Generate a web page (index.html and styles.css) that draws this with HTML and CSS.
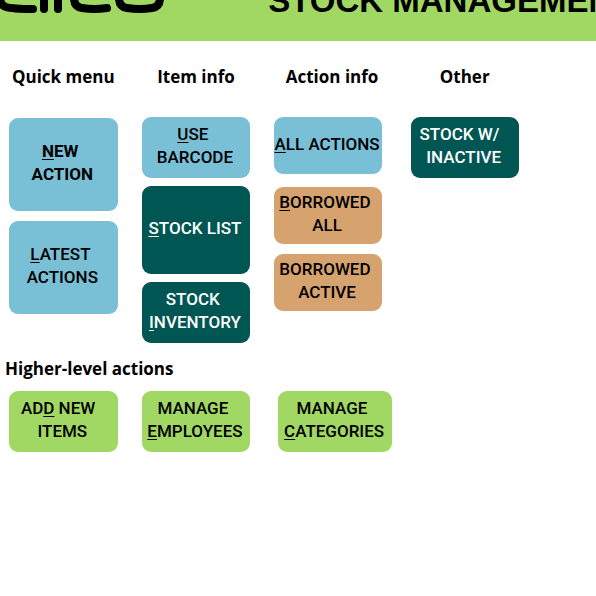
FILE: index.html
```
<!DOCTYPE html>
<html lang="en">
<head>
<meta charset="utf-8">
<meta name="viewport" content="width=device-width, initial-scale=1">
<title>Stock management</title>
<link rel="stylesheet" href="styles.css">
</head>
<body>
<header class="banner">
  <svg class="logo" viewBox="0 0 168 15" role="img" aria-label="Company logo">
    <g fill="none" stroke="#000" stroke-width="8">
      <path d="M0 -6Q-1 5 6 7Q12 9 33 9" stroke-linecap="round"/>
      <path d="M44 -4V9" stroke-linecap="round"/>
      <path d="M58 -4V9" stroke-linecap="round"/>
      <path d="M74 -6V-2Q74 7 82 8Q94 10 107 8" stroke-linecap="round"/>
      <path d="M119 -6V-2Q119 7 127 8Q140 10 152 8Q160 7 160 -2V-6"/>
    </g>
  </svg>
  <h1 class="title">STOCK MANAGEMENT</h1>
</header>
<main class="page">
  <div class="menu">
    <section class="column first">
      <h2 class="heading">Quick menu</h2>
      <button class="btn blue large strong"><span><u>N</u>EW <br>ACTION</span></button>
      <button class="btn blue large"><span><u>L</u>ATEST <br>ACTIONS</span></button>
    </section>
    <section class="column second">
      <h2 class="heading">Item info</h2>
      <button class="btn blue"><span><u>U</u>SE <br>BARCODE</span></button>
      <button class="btn teal list"><span><u>S</u>TOCK LIST</span></button>
      <button class="btn teal"><span>STOCK <br><u>I</u>NVENTORY</span></button>
    </section>
    <section class="column third">
      <h2 class="heading">Action info</h2>
      <button class="btn blue small all"><span><u>A</u>LL ACTIONS</span></button>
      <button class="btn tan small"><span><u>B</u>ORROWED <br>ALL</span></button>
      <button class="btn tan small"><span>BORROWED <br>ACTIVE</span></button>
    </section>
    <section class="column">
      <h2 class="heading">Other</h2>
      <button class="btn teal"><span>STOCK W/  <br>INACTIVE</span></button>
    </section>
  </div>
  <h2 class="heading higher">Higher-level actions</h2>
  <div class="menu actions">
    <button class="btn green"><span>AD<u>D</u> NEW  <br>ITEMS</span></button>
    <button class="btn green"><span>MANAGE <br><u>E</u>MPLOYEES</span></button>
    <button class="btn green wide"><span>MANAGE <br><u>C</u>ATEGORIES</span></button>
  </div>
</main>
</body>
</html>
```
FILE: styles.css
```
* {
  box-sizing: border-box;
}

body {
  margin: 0;
  background: #fff;
  color: #000;
  font-family: "Liberation Sans", sans-serif;
}

.banner {
  display: flex;
  justify-content: space-between;
  align-items: flex-end;
  height: 41px;
  padding-bottom: 24px;
  overflow: hidden;
  background: #a1d763;
}

.logo {
  flex: none;
  align-self: flex-start;
  width: 168px;
  height: 15px;
}

.title {
  flex: none;
  width: 55%;
  margin: 0;
  font-size: 33px;
  line-height: 33px;
  font-weight: 700;
  white-space: nowrap;
}

.page {
  padding: 24px 13% 24px 9px;
}

.menu {
  display: grid;
  grid-template-columns: 109fr 109fr 113fr 108fr;
  column-gap: 24px;
  align-items: start;
}

.actions {
  grid-template-columns: 109fr 109fr 118fr 103fr;
}

.column {
  display: flex;
  flex-direction: column;
}

.heading {
  margin: 0 0 28px;
  font-family: "Open Sans", sans-serif;
  font-size: 17px;
  line-height: 24px;
  font-weight: 700;
  text-align: center;
  white-space: nowrap;
}

.first {
  gap: 10px;
}

.first .heading {
  margin-bottom: 19px;
}

.second {
  gap: 8px;
}

.second .heading {
  margin-bottom: 20px;
}

.third {
  gap: 10px;
  padding-right: 5px;
}

.third .heading {
  margin-bottom: 18px;
  padding-left: 8px;
}

.btn {
  display: flex;
  align-items: center;
  justify-content: center;
  height: 61px;
  margin: 0;
  padding: 0 2px 3px 0;
  border: 0;
  border-radius: 9px;
  color: inherit;
  font-family: "Roboto", sans-serif;
  font-size: 17px;
  line-height: 23px;
  font-weight: 500;
  text-align: center;
  white-space: pre;
  cursor: pointer;
}

.btn u {
  text-decoration-thickness: 1px;
  text-underline-offset: 2px;
}

.large {
  height: 93px;
}

.list {
  height: 88px;
}

.small {
  height: 57px;
}

.all {
  margin-bottom: 3px;
}

.strong {
  font-weight: 700;
}

.blue {
  background: #79bfd6;
}

.teal {
  background: #005653;
  color: #fff;
}

.tan {
  background: #d6a26e;
}

.green {
  background: #a1d763;
}

.higher {
  margin: 14px 0 10px -4px;
  text-align: left;
}

.wide {
  margin-left: 4px;
}
```
